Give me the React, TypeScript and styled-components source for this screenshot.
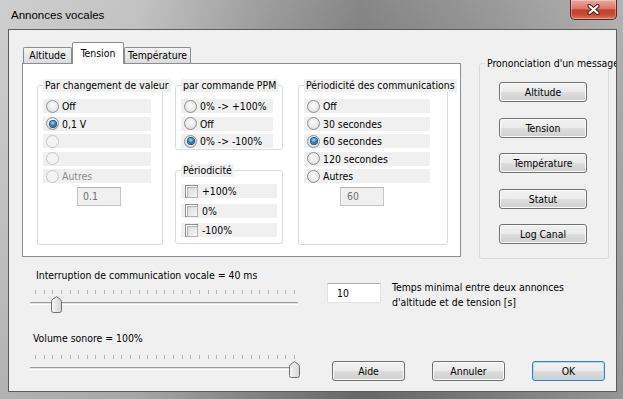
import React from "react";
import styled, { createGlobalStyle } from "styled-components";

const GlobalStyle = createGlobalStyle`
  html, body { margin: 0; padding: 0; }
  body {
    font-family: "DejaVu Sans Condensed", "DejaVu Sans", "Liberation Sans", sans-serif;
    font-stretch: condensed;
    font-size: 10.4px;
    color: #000;
    background: #fff;
  }
  * { box-sizing: border-box; }
`;

const Window = styled.div`
  width: 623px;
  height: 399px;
  display: flex;
  flex-direction: column;
  padding: 0 6px 7px 8px;
  overflow: hidden;
  background:
    linear-gradient(180deg, rgba(255, 255, 255, 0.15) 0%, rgba(255, 255, 255, 0) 35%, rgba(0, 0, 0, 0.1) 100%),
    linear-gradient(90deg, #c6c6c6 0%, #b9b9b9 22%, #8e8e8e 42%, #727272 58%, #878787 78%, #a6a6a6 100%);
`;

const TitleBar = styled.div`
  height: 29px;
  flex-shrink: 0;
  display: flex;
  align-items: flex-start;
`;

const Title = styled.span`
  margin: 8px 0 0 3px;
  font-family: "Liberation Sans", Arial, sans-serif;
  font-stretch: normal;
  font-size: 11.5px;
  line-height: 14px;
`;

const CloseButton = styled.div`
  margin-left: auto;
  width: 47px;
  height: 20px;
  border: 1px solid #5a2520;
  border-top: none;
  border-radius: 0 0 5px 5px;
  background: linear-gradient(180deg, #e9a99f 0%, #d9776a 45%, #c4402f 52%, #c84a34 78%, #df7a5c 100%);
  box-shadow: inset 0 0 0 1px rgba(255, 255, 255, 0.3);
  display: flex;
  align-items: center;
  justify-content: center;
`;

const Client = styled.div`
  flex: 1;
  display: flex;
  flex-direction: column;
  border: 1px solid #5c5c5c;
  background: #f0f0f0;
  padding: 12px 0 0 13px;
  overflow: hidden;
`;

const TopRow = styled.div`
  display: flex;
  align-items: flex-start;
`;

const TabControl = styled.div`
  width: 439px;
  flex-shrink: 0;
`;

const TabStrip = styled.div`
  height: 21px;
  display: flex;
  align-items: flex-end;
  padding-left: 1px;
`;

const Tab = styled.div<{ $active?: boolean; $w: number }>`
  position: relative;
  z-index: ${(p) => (p.$active ? 1 : 0)};
  width: ${(p) => p.$w}px;
  height: ${(p) => (p.$active ? 22 : 16)}px;
  margin-bottom: ${(p) => (p.$active ? -1 : 0)}px;
  border: 1px solid #898c95;
  border-bottom: none;
  border-radius: 2px 2px 0 0;
  background: ${(p) =>
    p.$active ? "#fff" : "linear-gradient(180deg, #f3f3f3 0%, #e8e8e8 50%, #dcdcdc 100%)"};
  text-align: center;
  line-height: ${(p) => (p.$active ? 20 : 15)}px;
  white-space: nowrap;
`;

const TabPane = styled.div`
  height: 194px;
  border: 1px solid #898c95;
  background: #fff;
  display: flex;
  align-items: flex-start;
  padding: 15px 0 0 14px;
`;

const Column = styled.div<{ $ml: number }>`
  display: flex;
  flex-direction: column;
  margin-left: ${(p) => p.$ml}px;
`;

const GroupBox = styled.fieldset<{ $w: number; $h: number; $ml?: number; $mt?: number }>`
  width: ${(p) => p.$w}px;
  height: ${(p) => p.$h}px;
  min-width: 0;
  margin: ${(p) => p.$mt ?? 0}px 0 0 ${(p) => p.$ml ?? 0}px;
  padding: 0;
  border: 1px solid #d5dbe0;
  border-radius: 3px;
  flex-shrink: 0;
`;

const Legend = styled.legend<{ $ml: number }>`
  margin-left: ${(p) => p.$ml}px;
  padding: 0 2px;
  line-height: 13px;
  white-space: nowrap;
  background: #f0f0f0;
`;

const GroupBody = styled.div<{ $pt: number; $pl: number }>`
  display: flex;
  flex-direction: column;
  align-items: flex-start;
  padding: ${(p) => p.$pt}px 0 0 ${(p) => p.$pl}px;
`;

const OptionRow = styled.div<{ $w: number; $pitch: number; $pl?: number; $disabled?: boolean }>`
  width: ${(p) => p.$w}px;
  height: 14px;
  margin-bottom: ${(p) => p.$pitch - 14}px;
  padding-left: ${(p) => p.$pl ?? 3}px;
  display: flex;
  align-items: center;
  gap: ${(p) => ((p.$pl ?? 3) > 3 ? 4 : 3)}px;
  background: #f0f0f0;
  color: ${(p) => (p.$disabled ? "#8d8d8d" : "#000")};
  white-space: nowrap;
`;

const Radio = styled.span<{ $checked?: boolean; $disabled?: boolean }>`
  width: 13px;
  height: 13px;
  flex-shrink: 0;
  border-radius: 50%;
  border: 1px solid ${(p) => (p.$disabled ? "#c6c6c6" : "#8e8f8f")};
  background: ${(p) =>
    p.$disabled
      ? "#f4f4f4"
      : "radial-gradient(circle at 50% 40%, #fdfdfd 0%, #ececec 50%, #d2d2d2 100%)"};
  display: flex;
  align-items: center;
  justify-content: center;

  &::after {
    content: "";
    display: ${(p) => (p.$checked ? "block" : "none")};
    width: 6px;
    height: 6px;
    border-radius: 50%;
    background: radial-gradient(circle at 45% 35%, #a7e4ff 0%, #2f86c6 45%, #0e3c69 100%);
    box-shadow: 0 0 0 1px #1d4f80;
  }
`;

const CheckBox = styled.span`
  width: 13px;
  height: 13px;
  flex-shrink: 0;
  border: 1px solid #8e8f8f;
  background: #fff;
  padding: 1px;

  &::after {
    content: "";
    display: block;
    width: 100%;
    height: 100%;
    border: 1px solid #b0b4ba;
    background: linear-gradient(135deg, #d8dadd 0%, #f7f7f7 100%);
  }
`;

const TextBox = styled.div<{ $w: number; $h?: number; $pl: number; $disabled?: boolean; $ml?: number; $mt?: number }>`
  width: ${(p) => p.$w}px;
  height: ${(p) => p.$h ?? 19}px;
  margin: ${(p) => p.$mt ?? 0}px 0 0 ${(p) => p.$ml ?? 0}px;
  padding-left: ${(p) => p.$pl}px;
  line-height: ${(p) => (p.$h ?? 19) - 2}px;
  border: 1px solid ${(p) => (p.$disabled ? "#c4c4c4" : "#e2e3ea")};
  border-top-color: ${(p) => (p.$disabled ? "#b5b5b5" : "#abadb3")};
  background: ${(p) => (p.$disabled ? "#f0f0f0" : "#fff")};
  color: ${(p) => (p.$disabled ? "#6d6d6d" : "#000")};
  flex-shrink: 0;
`;

const PushButton = styled.button<{ $w: number; $default?: boolean }>`
  width: ${(p) => p.$w}px;
  height: 20px;
  padding: 0;
  font: inherit;
  color: #000;
  border: 1px solid ${(p) => (p.$default ? "#3c7fb1" : "#707070")};
  border-radius: 3px;
  background: linear-gradient(180deg, #f2f2f2 0%, #ebebeb 48%, #dddddd 52%, #cfcfcf 100%);
  box-shadow: inset 0 0 0 1px ${(p) => (p.$default ? "#a9def7" : "#fbfbfb")};
  flex-shrink: 0;
`;

const SideButtons = styled.div`
  display: flex;
  flex-direction: column;
  gap: 15.5px;
  padding: 12px 0 0 19px;
`;

const BottomRow = styled.div`
  flex: 1;
  display: flex;
  margin-top: 10px;
  padding: 0 0 10px 8px;
`;

const LeftCol = styled.div`
  width: 268px;
  display: flex;
  flex-direction: column;
`;

const SliderLabel = styled.div<{ $pl: number; $mt?: number }>`
  padding-left: ${(p) => p.$pl}px;
  margin-top: ${(p) => p.$mt ?? 0}px;
  line-height: 13px;
  white-space: nowrap;
`;

const SliderBox = styled.div<{ $mt: number }>`
  position: relative;
  height: 24px;
  margin-top: ${(p) => p.$mt}px;
`;

const Ticks = styled.div`
  height: 5px;
  margin: 0 3px 0 5px;
  display: flex;
  justify-content: space-between;
  align-items: flex-start;
`;

const Tick = styled.span`
  width: 1px;
  height: 4px;
  background: #b3b3b3;
`;

const Track = styled.div`
  margin-top: 7px;
  height: 3px;
  border-top: 1px solid #9c9c9c;
  border-bottom: 1px solid #ffffff;
  background: #e3e3e3;
`;

const Thumb = styled.svg`
  position: absolute;
  top: 6px;
`;

const RightCol = styled.div`
  width: 278px;
  margin-left: 29px;
  display: flex;
  flex-direction: column;
`;

const TimeRow = styled.div`
  display: flex;
  align-items: flex-start;
  margin-top: 11px;
`;

const Hint = styled.div`
  margin-left: 11px;
  line-height: 15px;
`;

const ButtonRow = styled.div`
  margin: auto 0 0 5px;
  width: 273px;
  display: flex;
  justify-content: space-between;
`;

type Option = { label: string; checked?: boolean; disabled?: boolean };

const valueOptions: Option[] = [
  { label: "Off" },
  { label: "0,1 V", checked: true },
  { label: "", disabled: true },
  { label: "", disabled: true },
  { label: "Autres", disabled: true },
];

const ppmOptions: Option[] = [
  { label: "0% -> +100%" },
  { label: "Off" },
  { label: "0% -> -100%", checked: true },
];

const periodOptions: Option[] = [
  { label: "Off" },
  { label: "30 secondes" },
  { label: "60 secondes", checked: true },
  { label: "120 secondes" },
  { label: "Autres" },
];

const checks = ["+100%", "0%", "-100%"];
const speakButtons = ["Altitude", "Tension", "Température", "Statut", "Log Canal"];
const tabs = [
  { label: "Altitude", w: 49 },
  { label: "Tension", w: 52, active: true },
  { label: "Température", w: 67 },
];

const RadioList = ({ options, w }: { options: Option[]; w: number }) => (
  <>
    {options.map((o, i) => (
      <OptionRow key={i} $w={w} $pitch={17.5} $disabled={o.disabled}>
        <Radio $checked={o.checked} $disabled={o.disabled} />
        {o.label}
      </OptionRow>
    ))}
  </>
);

const Slider = ({ value, id, mt }: { value: number; id: string; mt: number }) => (
  <SliderBox $mt={mt}>
    <Ticks>
      {Array.from({ length: 31 }).map((_, i) => (
        <Tick key={i} />
      ))}
    </Ticks>
    <Track />
    <Thumb width="11" height="17" viewBox="0 0 11 17" style={{ left: value * 259 }}>
      <defs>
        <linearGradient id={id} x1="0" y1="0" x2="1" y2="0">
          <stop offset="0" stopColor="#f8f8f8" />
          <stop offset="1" stopColor="#d3d3d3" />
        </linearGradient>
      </defs>
      <path
        d="M0.5 5.5 Q0.5 4.2 1.7 3.3 L5.5 0.6 L9.3 3.3 Q10.5 4.2 10.5 5.5 V14.5 Q10.5 16.5 8.5 16.5 H2.5 Q0.5 16.5 0.5 14.5 Z"
        fill={`url(#${id})`}
        stroke="#6f6f6f"
      />
    </Thumb>
  </SliderBox>
);

export default function App() {
  return (
    <>
      <GlobalStyle />
      <Window>
        <TitleBar>
          <Title>Annonces vocales</Title>
          <CloseButton>
            <svg width="13" height="11" viewBox="0 0 13 11">
              <path d="M2.5 2 L10.5 9 M10.5 2 L2.5 9" stroke="#55201a" strokeWidth="4.2" strokeLinecap="round" />
              <path d="M2.5 2 L10.5 9 M10.5 2 L2.5 9" stroke="#fff" strokeWidth="2.2" strokeLinecap="round" />
            </svg>
          </CloseButton>
        </TitleBar>
        <Client>
          <TopRow>
            <TabControl>
              <TabStrip>
                {tabs.map((t) => (
                  <Tab key={t.label} $w={t.w} $active={t.active}>
                    {t.label}
                  </Tab>
                ))}
              </TabStrip>
              <TabPane>
                <GroupBox $w={126} $h={166}>
                  <Legend $ml={5}>Par changement de valeur</Legend>
                  <GroupBody $pt={7} $pl={5}>
                    <RadioList options={valueOptions} w={108} />
                    <TextBox $w={44} $pl={5} $disabled $ml={34}>
                      0.1
                    </TextBox>
                  </GroupBody>
                </GroupBox>
                <Column $ml={12}>
                  <GroupBox $w={108} $h={71}>
                    <Legend $ml={5}>par commande PPM</Legend>
                    <GroupBody $pt={7} $pl={5}>
                      <RadioList options={ppmOptions} w={92} />
                    </GroupBody>
                  </GroupBox>
                  <GroupBox $w={108} $h={80} $mt={14}>
                    <Legend $ml={5}>Périodicité</Legend>
                    <GroupBody $pt={7} $pl={5}>
                      {checks.map((c) => (
                        <OptionRow key={c} $w={96} $pitch={19.5} $pl={4}>
                          <CheckBox />
                          {c}
                        </OptionRow>
                      ))}
                    </GroupBody>
                  </GroupBox>
                </Column>
                <GroupBox $w={150} $h={166} $ml={15}>
                  <Legend $ml={5}>Périodicité des communications</Legend>
                  <GroupBody $pt={7} $pl={5}>
                    <RadioList options={periodOptions} w={126} />
                    <TextBox $w={44} $pl={6} $disabled $ml={36}>
                      60
                    </TextBox>
                  </GroupBody>
                </GroupBox>
              </TabPane>
            </TabControl>
            <GroupBox $w={130} $h={202} $ml={18} $mt={15}>
              <Legend $ml={5}>Prononciation d'un message</Legend>
              <SideButtons>
                {speakButtons.map((b) => (
                  <PushButton key={b} $w={88}>
                    {b}
                  </PushButton>
                ))}
              </SideButtons>
            </GroupBox>
          </TopRow>
          <BottomRow>
            <LeftCol>
              <SliderLabel $pl={6}>Interruption de communication vocale = 40 ms</SliderLabel>
              <Slider value={40 / 500} id="thumb-a" mt={8} />
              <SliderLabel $pl={3} $mt={18}>
                Volume sonore = 100%
              </SliderLabel>
              <Slider value={1} id="thumb-b" mt={10} />
            </LeftCol>
            <RightCol>
              <TimeRow>
                <TextBox $w={54} $h={20} $pl={9} $mt={3}>
                  10
                </TextBox>
                <Hint>
                  Temps minimal entre deux annonces
                  <br />
                  d'altitude et de tension [s]
                </Hint>
              </TimeRow>
              <ButtonRow>
                <PushButton $w={73}>Aide</PushButton>
                <PushButton $w={73}>Annuler</PushButton>
                <PushButton $w={73} $default>
                  OK
                </PushButton>
              </ButtonRow>
            </RightCol>
          </BottomRow>
        </Client>
      </Window>
    </>
  );
}
